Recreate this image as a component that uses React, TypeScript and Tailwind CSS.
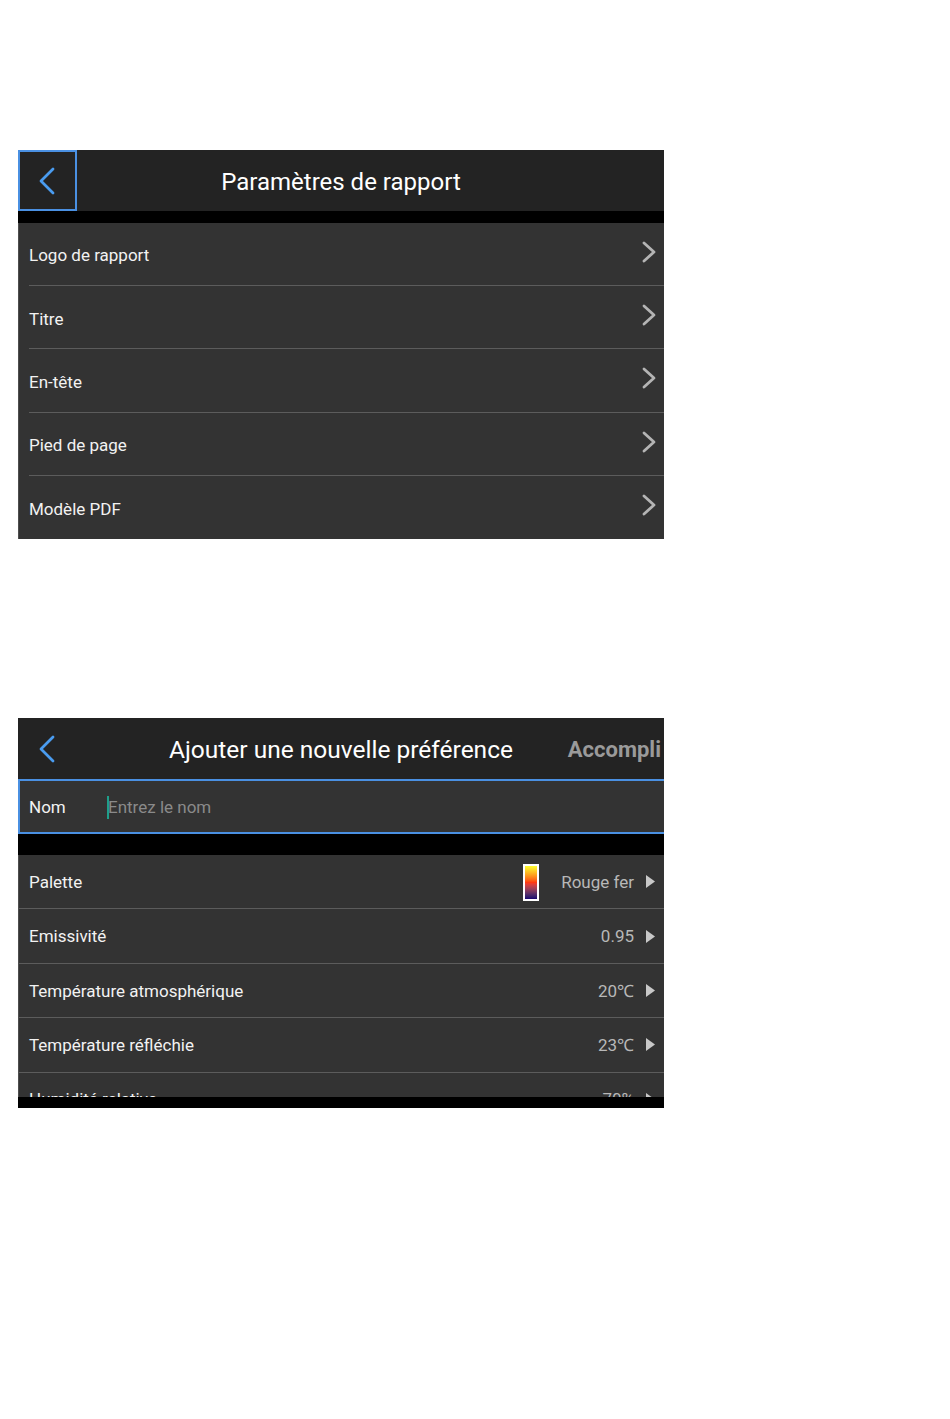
import React from "react";

const font = { fontFamily: "Roboto, 'Noto Sans', sans-serif" };

const BackChevron = () => (
  <svg width="18" height="28" viewBox="0 0 18 28" fill="none">
    <polyline points="15,2 3,14 15,26" stroke="#4a9cf0" strokeWidth="2.8" strokeLinecap="round" strokeLinejoin="round" />
  </svg>
);

const RightChevron = () => (
  <svg width="16" height="22" viewBox="0 0 16 22" fill="none">
    <polyline points="3,2 13,11 3,20" stroke="#b4b4b4" strokeWidth="2.8" strokeLinecap="round" strokeLinejoin="round" />
  </svg>
);

const Triangle = () => (
  <svg width="9" height="13" viewBox="0 0 9 13">
    <polygon points="0,0 9,6.5 0,13" fill="#c8c8c8" />
  </svg>
);

const reportItems = ["Logo de rapport", "Titre", "En-tête", "Pied de page", "Modèle PDF"];

const prefItems = [
  { label: "Palette", value: "Rouge fer", swatch: true },
  { label: "Emissivité", value: "0.95" },
  { label: "Température atmosphérique", value: "20℃" },
  { label: "Température réfléchie", value: "23℃" },
  { label: "Humidité relative", value: "70%" },
];

const ReportSettings = () => (
  <div className="w-[646px] ml-[18px] mt-[150px]">
    {/* header */}
    <div className="flex h-[61px] bg-[#232323] items-center">
      <div className="w-[59px] h-[61px] border-2 border-[#4a90e2] flex items-center justify-center pr-[2px]">
        <BackChevron />
      </div>
      <div className="flex-1 text-center text-white text-[24px] pt-[3px]">Paramètres de rapport</div>
      <div className="w-[59px]" />
    </div>
    <div className="h-3 bg-black" />
    <div className="bg-[#333333] border-l border-[#4e4e4e] pl-[10px]">
      {reportItems.map((item, i) => (
        <div
          key={item}
          className={`flex items-center justify-between h-[63.2px] pr-[7px] ${i < reportItems.length - 1 ? "border-b border-[#5c5c5c]" : ""}`}
        >
          <span className="text-[17px] text-[#f2f2f2] pt-[4px]">{item}</span>
          <span className="pb-[4px]">
            <RightChevron />
          </span>
        </div>
      ))}
    </div>
  </div>
);

const NewPreference = () => (
  <div className="w-[646px] ml-[18px] mt-[179px]">
    {/* header */}
    <div className="grid grid-cols-[1fr_auto_1fr] h-[61px] bg-[#232323] items-center">
      <div className="pl-[20px] flex items-center pt-[2px]">
        <BackChevron />
      </div>
      <div className="text-white text-[24.5px] pt-[3px]">Ajouter une nouvelle préférence</div>
      <div className="flex justify-end pr-[3px] text-[22px] font-bold text-[#9a9a9a] pt-[3px]">Accompli</div>
    </div>
    {/* name input */}
    <div className="h-[55px] bg-[#333333] border-t-2 border-b-2 border-l-2 border-[#4a90e2] flex items-center pl-[9px] pt-[2px]">
      <span className="w-[78px] text-[17px] text-[#f2f2f2]">Nom</span>
      <span className="w-[2px] h-[23px] bg-[#1f9e8a]" />
      <span className="text-[17px] text-[#8a8a8a] -ml-px">Entrez le nom</span>
    </div>
    <div className="h-[21px] bg-black" />
    {/* settings list */}
    <div className="h-[242px] overflow-hidden bg-[#333333] border-l border-[#4e4e4e]">
      {prefItems.map((item) => (
        <div
          key={item.label}
          className="flex items-center h-[54.4px] border-b border-[#5c5c5c] pl-[10px] pr-[9px] pt-[2px]"
        >
          <span className="flex-1 text-[17px] text-[#f2f2f2]">{item.label}</span>
          {item.swatch && (
            <div className="w-[16px] h-[37px] border-2 border-white bg-gradient-to-b from-[#ffff30] via-[#ff3a10] to-[#1c0070] mr-[22px]" />
          )}
          <span className="text-[17px] text-[#b8b8b8] mr-[12px]">{item.value}</span>
          <span className="pb-[2px]">
            <Triangle />
          </span>
        </div>
      ))}
    </div>
    <div className="h-[11px] bg-black" />
  </div>
);

export default function App() {
  return (
    <div className="w-[950px] min-h-[1419px] bg-white overflow-hidden" style={font}>
      <ReportSettings />
      <NewPreference />
    </div>
  );
}
